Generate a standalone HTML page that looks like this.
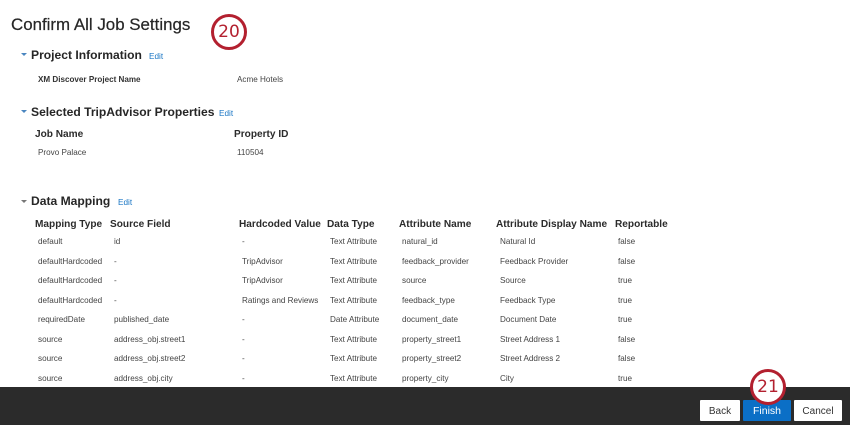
<!DOCTYPE html>
<html><head><meta charset="utf-8"><style>
html,body{margin:0;padding:0;width:850px;height:425px;overflow:hidden;background:#fff}
body{position:relative;font-family:"Liberation Sans",Arial,sans-serif;color:#3a3a3a}
.t{position:absolute;white-space:nowrap;line-height:16px;height:16px}
.c,.h,.e{margin-top:1px}
.c{font-size:8.15px;color:#444}
.h{font-size:10.1px;font-weight:bold;color:#2b2b2b}
.s{font-size:12.1px;font-weight:bold;color:#262626}
.e{font-size:8.2px;color:#1a76c4}
.a{position:absolute;width:0;height:0;border-left:3px solid transparent;border-right:3px solid transparent;border-top:3px solid #4a86c0}
.r{position:absolute;box-sizing:border-box;width:36px;height:36px;border:3px solid #b3202f;border-radius:50%;background:#fff;color:#b3202f;font-size:17px;line-height:30px;text-align:center;font-family:"DejaVu Sans","Liberation Sans",sans-serif}
.b{position:absolute;top:400px;height:21px;line-height:23px;text-align:center;font-size:10px;background:#fff;color:#333;border-radius:1px}
</style></head><body>
<div class="t" style="left:11px;top:16px;font-size:16.9px;line-height:18px;height:18px;color:#262626;-webkit-text-stroke:.2px #262626">Confirm All Job Settings</div>
<div class="r" style="left:211px;top:14px">20</div>
<div class="a" style="left:21px;top:53px"></div>
<div class="t s" style="left:31px;top:47px">Project Information</div>
<div class="t e" style="left:149px;top:48px">Edit</div>
<div class="t c" style="left:38px;top:71px;font-weight:bold;font-size:8.1px;color:#333">XM Discover Project Name</div>
<div class="t c" style="left:237px;top:71px">Acme Hotels</div>
<div class="a" style="left:21px;top:110px"></div>
<div class="t s" style="left:31px;top:104px">Selected TripAdvisor Properties</div>
<div class="t e" style="left:219px;top:105px">Edit</div>
<div class="t h" style="left:35px;top:126px">Job Name</div>
<div class="t h" style="left:234px;top:126px">Property ID</div>
<div class="t c" style="left:38px;top:144px">Provo Palace</div>
<div class="t c" style="left:237px;top:144px">110504</div>
<div class="a" style="left:21px;top:200px;border-top-color:#777"></div>
<div class="t s" style="left:31px;top:193px">Data Mapping</div>
<div class="t e" style="left:118px;top:194px">Edit</div>
<div class="t h" style="left:35px;top:216px">Mapping Type</div>
<div class="t h" style="left:110px;top:216px">Source Field</div>
<div class="t h" style="left:239px;top:216px">Hardcoded Value</div>
<div class="t h" style="left:327px;top:216px">Data Type</div>
<div class="t h" style="left:399px;top:216px">Attribute Name</div>
<div class="t h" style="left:496px;top:216px">Attribute Display Name</div>
<div class="t h" style="left:615px;top:216px">Reportable</div>

<div class="t c" style="left:38px;top:233px">default</div><div class="t c" style="left:114px;top:233px">id</div><div class="t c" style="left:242px;top:233px">-</div><div class="t c" style="left:330px;top:233px">Text Attribute</div><div class="t c" style="left:402px;top:233px">natural_id</div><div class="t c" style="left:500px;top:233px">Natural Id</div><div class="t c" style="left:618px;top:233px">false</div>

<div class="t c" style="left:38px;top:253px">defaultHardcoded</div><div class="t c" style="left:114px;top:253px">-</div><div class="t c" style="left:242px;top:253px">TripAdvisor</div><div class="t c" style="left:330px;top:253px">Text Attribute</div><div class="t c" style="left:402px;top:253px">feedback_provider</div><div class="t c" style="left:500px;top:253px">Feedback Provider</div><div class="t c" style="left:618px;top:253px">false</div>

<div class="t c" style="left:38px;top:272px">defaultHardcoded</div><div class="t c" style="left:114px;top:272px">-</div><div class="t c" style="left:242px;top:272px">TripAdvisor</div><div class="t c" style="left:330px;top:272px">Text Attribute</div><div class="t c" style="left:402px;top:272px">source</div><div class="t c" style="left:500px;top:272px">Source</div><div class="t c" style="left:618px;top:272px">true</div>

<div class="t c" style="left:38px;top:292px">defaultHardcoded</div><div class="t c" style="left:114px;top:292px">-</div><div class="t c" style="left:242px;top:292px">Ratings and Reviews</div><div class="t c" style="left:330px;top:292px">Text Attribute</div><div class="t c" style="left:402px;top:292px">feedback_type</div><div class="t c" style="left:500px;top:292px">Feedback Type</div><div class="t c" style="left:618px;top:292px">true</div>

<div class="t c" style="left:38px;top:311px">requiredDate</div><div class="t c" style="left:114px;top:311px">published_date</div><div class="t c" style="left:242px;top:311px">-</div><div class="t c" style="left:330px;top:311px">Date Attribute</div><div class="t c" style="left:402px;top:311px">document_date</div><div class="t c" style="left:500px;top:311px">Document Date</div><div class="t c" style="left:618px;top:311px">true</div>

<div class="t c" style="left:38px;top:331px">source</div><div class="t c" style="left:114px;top:331px">address_obj.street1</div><div class="t c" style="left:242px;top:331px">-</div><div class="t c" style="left:330px;top:331px">Text Attribute</div><div class="t c" style="left:402px;top:331px">property_street1</div><div class="t c" style="left:500px;top:331px">Street Address 1</div><div class="t c" style="left:618px;top:331px">false</div>

<div class="t c" style="left:38px;top:350px">source</div><div class="t c" style="left:114px;top:350px">address_obj.street2</div><div class="t c" style="left:242px;top:350px">-</div><div class="t c" style="left:330px;top:350px">Text Attribute</div><div class="t c" style="left:402px;top:350px">property_street2</div><div class="t c" style="left:500px;top:350px">Street Address 2</div><div class="t c" style="left:618px;top:350px">false</div>

<div class="t c" style="left:38px;top:370px">source</div><div class="t c" style="left:114px;top:370px">address_obj.city</div><div class="t c" style="left:242px;top:370px">-</div><div class="t c" style="left:330px;top:370px">Text Attribute</div><div class="t c" style="left:402px;top:370px">property_city</div><div class="t c" style="left:500px;top:370px">City</div><div class="t c" style="left:618px;top:370px">true</div>

<div style="position:absolute;left:0;top:387px;width:850px;height:38px;background:#2b2b2b"></div>
<div class="b" style="left:700px;width:40px">Back</div>
<div class="b" style="left:743px;width:48px;background:#0b6fc6;color:#fff;font-size:10.5px">Finish</div>
<div class="b" style="left:794px;width:48px">Cancel</div>
<div class="r" style="left:750px;top:369px">21</div>
</body></html>
